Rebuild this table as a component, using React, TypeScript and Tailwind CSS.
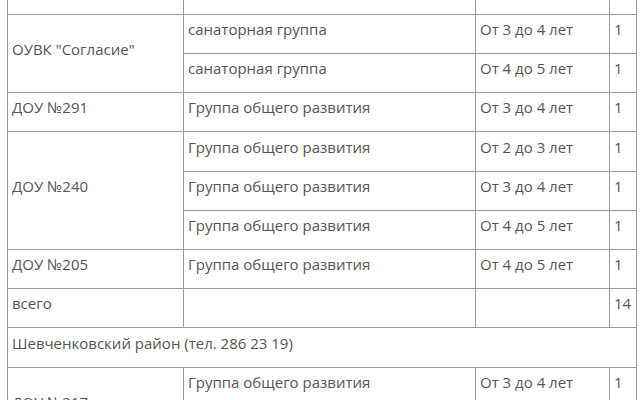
const font = { fontFamily: '"Open Sans", "Liberation Sans", sans-serif' }

type Cell = { text?: string; span?: string }

const cells: Cell[] = [
  { text: '' },
  { text: 'Группа общего развития' },
  { text: 'От 5 до 6 лет' },
  { text: '1' },

  { text: 'ОУВК "Согласие"', span: 'row-span-2' },
  { text: 'санаторная группа' },
  { text: 'От 3 до 4 лет' },
  { text: '1' },
  { text: 'санаторная группа' },
  { text: 'От 4 до 5 лет' },
  { text: '1' },

  { text: 'ДОУ №291' },
  { text: 'Группа общего развития' },
  { text: 'От 3 до 4 лет' },
  { text: '1' },

  { text: 'ДОУ №240', span: 'row-span-3' },
  { text: 'Группа общего развития' },
  { text: 'От 2 до 3 лет' },
  { text: '1' },
  { text: 'Группа общего развития' },
  { text: 'От 3 до 4 лет' },
  { text: '1' },
  { text: 'Группа общего развития' },
  { text: 'От 4 до 5 лет' },
  { text: '1' },

  { text: 'ДОУ №205' },
  { text: 'Группа общего развития' },
  { text: 'От 4 до 5 лет' },
  { text: '1' },

  { text: 'всего' },
  { text: '' },
  { text: '' },
  { text: '14' },

  { text: 'Шевченковский район (тел. 286 23 19)', span: 'col-span-4' },

  { text: 'ДОУ №217', span: 'row-span-2' },
  { text: 'Группа общего развития' },
  { text: 'От 3 до 4 лет' },
  { text: '1' },
  { text: 'Группа общего развития' },
  { text: 'От 4 до 5 лет' },
  { text: '1' },
]

export default function App() {
  return (
    <div className="h-[400px] w-[640px] overflow-hidden bg-white pl-[7px]" style={font}>
      <div className="-mt-[25px] grid w-[630px] grid-cols-[175px_291px_133px_26px] grid-rows-[38px_38px_38px_38px_39px_38px_38px_38px_38px_39px_38px_38px] gap-px bg-[#9a9a9a] p-px">
        {cells.map((c, i) => (
          <div
            key={i}
            className={`flex items-center bg-white pb-[10px] pl-[4px] text-[15px] leading-[22px] text-[#555] whitespace-nowrap ${c.span ?? ''}`}
          >
            {c.text}
          </div>
        ))}
      </div>
    </div>
  )
}
